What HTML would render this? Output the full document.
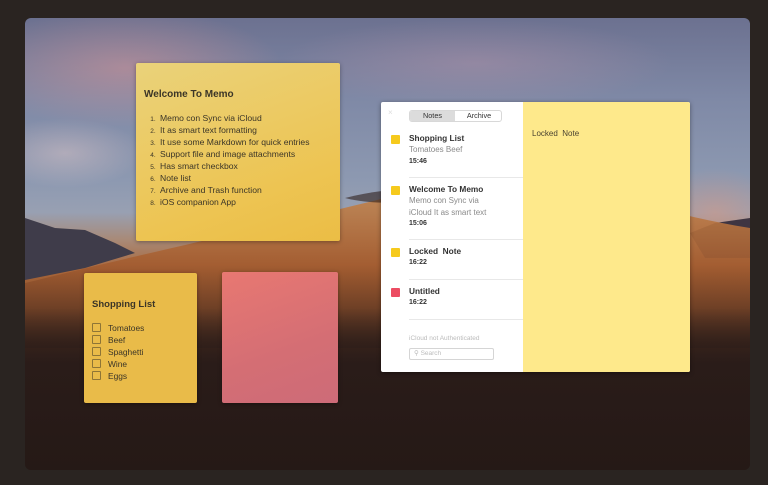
<!DOCTYPE html>
<html><head><meta charset="utf-8"><style>
*{margin:0;padding:0;box-sizing:border-box}
body{width:768px;height:485px;background:#2a2421;position:relative;overflow:hidden;font-family:"Liberation Sans",sans-serif}
.bg{position:absolute;left:25px;top:18px;width:725px;height:452px;border-radius:6px;overflow:hidden;
background:linear-gradient(180deg,#6c7190 0%,#7f89a6 18%,#8d99b1 36%,#98a0b2 43%,#a88a78 49%,#a9663a 56%,#88502c 63%,#52301f 71%,#2f201b 80%,#261a17 100%)}
.b{position:absolute;border-radius:50%}
.note{position:absolute;border-radius:2px;box-shadow:0 1px 4px rgba(0,0,0,.35)}
.w{left:136px;top:63px;width:204px;height:178px;background:linear-gradient(160deg,#ead27a,#edc452 70%,#ebbd45);color:#3b3527}
.w h3{position:absolute;left:8px;top:26px;font-size:10px;font-weight:bold}
.w ol{position:absolute;left:10px;top:49px;font-size:8.6px;list-style:none}
.w li{height:12px;line-height:12px}
.w li span{display:inline-block;width:14px;font-size:6.5px;text-align:center}
.s{left:84px;top:273px;width:113px;height:130px;background:#e9bb49;color:#3b3527}
.s h3{position:absolute;left:8px;top:26px;font-size:9.5px;font-weight:bold}
.s .it{position:absolute;left:8px;font-size:8.4px;line-height:10px}
.s .it i{display:inline-block;width:9px;height:9px;border:1px solid #8e7536;border-radius:1px;vertical-align:-1px;margin-right:7px}
.p{left:222px;top:272px;width:116px;height:131px;background:linear-gradient(160deg,#e87872,#d46e74 60%,#cd6b78)}
.app{position:absolute;left:381px;top:102px;width:309px;height:270px;background:#fff;border-radius:2px;box-shadow:0 1px 5px rgba(0,0,0,.4)}
.ed{position:absolute;left:142px;top:0;width:167px;height:270px;background:#fee98b;border-radius:0 2px 2px 0}
.ed div{position:absolute;left:9px;top:27px;font-size:8px;color:#4a4330}
.seg{position:absolute;left:28px;top:8px;width:93px;height:12px;border:1px solid #d8d8d8;border-radius:3px;font-size:7.3px;color:#333}
.seg span{position:absolute;top:0;height:10px;line-height:10px;text-align:center}
.row{position:absolute;left:28px;width:114px;border-bottom:1px solid #e8e8e8}
.sq{position:absolute;left:-18px;top:3px;width:9px;height:9px;border-radius:1px;background:#f6ca1d}
.t{font-size:8.3px;font-weight:bold;color:#333;line-height:12px}
.g{font-size:8px;color:#8a8a8a;line-height:11.5px}
.tm{font-size:7px;font-weight:bold;color:#333;line-height:12px}
</style></head><body>
<div class="bg">
 <div class="b" style="left:-60px;top:-10px;width:320px;height:120px;background:radial-gradient(ellipse,rgba(222,150,150,.5),rgba(222,150,150,0) 70%)"></div>
 <div class="b" style="left:250px;top:0;width:400px;height:90px;background:radial-gradient(ellipse,rgba(190,150,170,.4),rgba(190,150,170,0) 70%)"></div>
 <div class="b" style="left:-40px;top:100px;width:160px;height:70px;background:radial-gradient(ellipse,rgba(225,200,200,.45),rgba(225,200,200,0) 70%)"></div>
 <div class="b" style="left:620px;top:150px;width:140px;height:90px;background:radial-gradient(ellipse,rgba(230,150,120,.45),rgba(230,150,120,0) 70%)"></div>
 <svg style="position:absolute;left:0;top:0" width="725" height="452">
  <defs><linearGradient id="d" x1="0" y1="0" x2="0" y2="1"><stop offset="0" stop-color="#c98a4f"/><stop offset=".5" stop-color="#a35c30"/><stop offset="1" stop-color="#3a241c"/></linearGradient></defs>
  <path d="M0 200 L30 210 L60 212 L90 225 L110 235 L60 250 L0 262 Z" fill="#3f3c4a"/>
  <path d="M665 215 L690 205 L725 200 L725 240 L680 240 Z" fill="#3e3542"/>
  <path d="M0 265 C120 235 260 205 360 180 C420 168 470 160 520 165 C600 180 660 200 725 210 L725 330 L0 330 Z" fill="url(#d)" opacity=".9"/>
  <path d="M320 180 C360 170 400 168 430 175 C400 182 360 190 320 180Z" fill="#2e1f1c" opacity=".6"/>
 </svg>
 <div style="position:absolute;left:0;top:290px;width:725px;height:162px;background:linear-gradient(180deg,rgba(38,26,23,0),#2a1c19 35%,#251916)"></div>
</div>

<div class="note w"><h3>Welcome To Memo</h3>
<ol><li><span>1.</span>Memo con Sync via iCloud</li><li><span>2.</span>It as smart text formatting</li><li><span>3.</span>It use some Markdown for quick entries</li><li><span>4.</span>Support file and image attachments</li><li><span>5.</span>Has smart checkbox</li><li><span>6.</span>Note list</li><li><span>7.</span>Archive and Trash function</li><li><span>8.</span>iOS companion App</li></ol></div>

<div class="note s"><h3>Shopping List</h3>
<div class="it" style="top:50px"><i></i>Tomatoes</div>
<div class="it" style="top:62px"><i></i>Beef</div>
<div class="it" style="top:74px"><i></i>Spaghetti</div>
<div class="it" style="top:86px"><i></i>Wine</div>
<div class="it" style="top:98px"><i></i>Eggs</div></div>

<div class="note p"></div>

<div class="app">
 <div style="position:absolute;left:7px;top:6px;font-size:8px;color:#ddd">×</div>
 <div class="seg"><span style="left:0;width:45px;background:#dcdcdc;border-radius:2px 0 0 2px">Notes</span><span style="left:46px;width:46px">Archive</span></div>
 <div class="row" style="top:30px;height:46px"><div class="sq"></div><div class="t">Shopping List</div><div class="g">Tomatoes Beef</div><div class="tm">15:46</div></div>
 <div class="row" style="top:81px;height:57px"><div class="sq"></div><div class="t">Welcome To Memo</div><div class="g">Memo con Sync via<br>iCloud It as smart text</div><div class="tm">15:06</div></div>
 <div class="row" style="top:143px;height:35px"><div class="sq"></div><div class="t">Locked &nbsp;Note</div><div class="tm">16:22</div></div>
 <div class="row" style="top:183px;height:35px"><div class="sq" style="background:#ec4c62"></div><div class="t">Untitled</div><div class="tm">16:22</div></div>
 <div style="position:absolute;left:28px;top:233px;font-size:6.5px;color:#bbb">iCloud not Authenticated</div>
 <div style="position:absolute;left:28px;top:246px;width:85px;height:12px;border:1px solid #d5d5d5;border-radius:2px;font-size:6.5px;color:#bbb;line-height:10px;padding-left:4px">⚲ Search</div>
 <div class="ed"><div>Locked &nbsp;Note</div></div>
</div>
</body></html>
